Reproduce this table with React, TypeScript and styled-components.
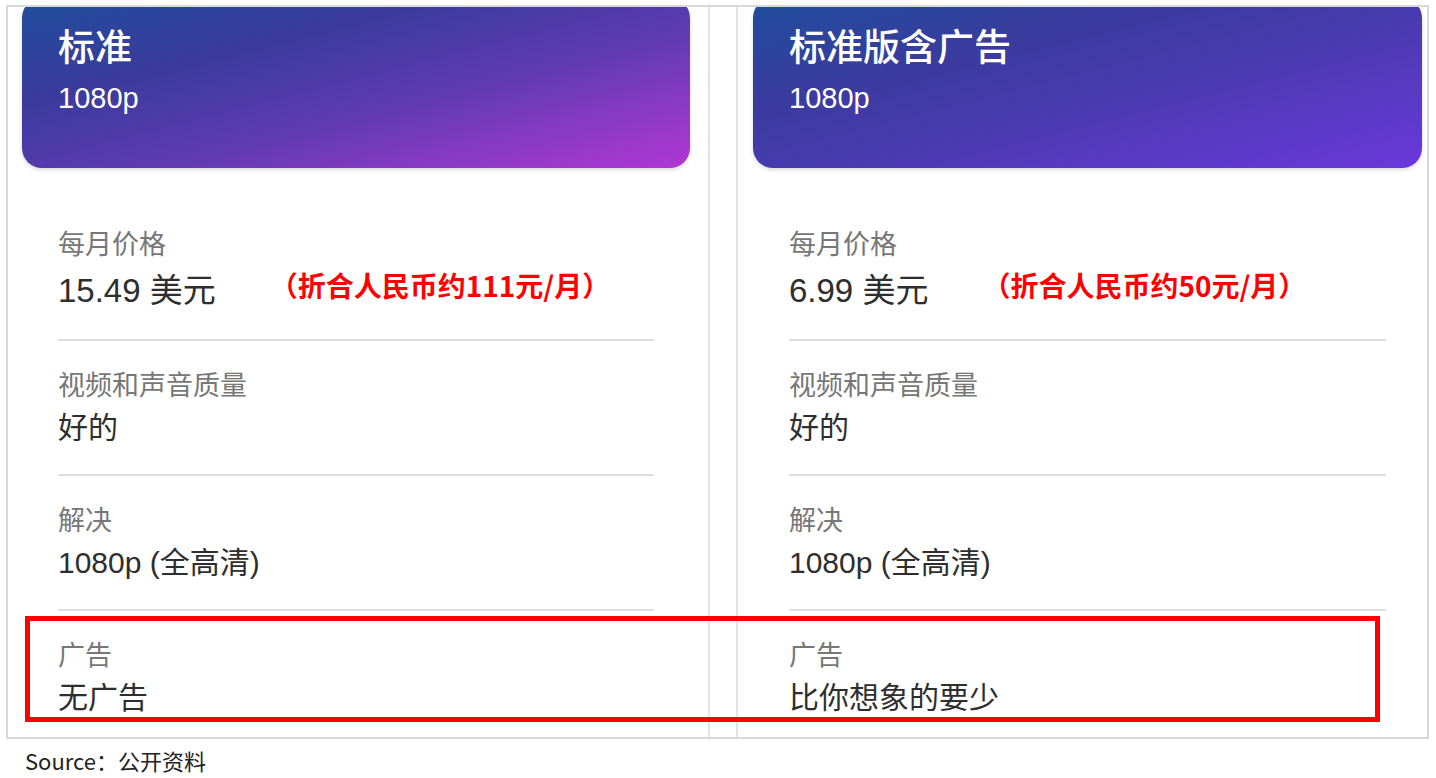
import React from "react";
import styled, { createGlobalStyle } from "styled-components";

const GlobalStyle = createGlobalStyle`
  html, body { margin: 0; padding: 0; background: #ffffff; }
  body { font-family: "Liberation Sans", "Noto Sans CJK SC", sans-serif; }
`;

const Page = styled.div`
  position: relative;
  width: 1436px;
  height: 778px;
  padding: 5px 0 0 6px;
  box-sizing: border-box;
  overflow: hidden;
`;

const Frame = styled.div`
  width: 1423px;
  height: 734px;
  box-sizing: border-box;
  border: 2px solid #d9d9d9;
  display: flex;
  overflow: hidden;
  background: #fff;
`;

const Panel = styled.div<{ $side: "left" | "right" }>`
  display: flex;
  flex-direction: column;
  box-sizing: border-box;
  ${(p) =>
    p.$side === "left"
      ? `width: 702px; border-right: 2px solid #e4e4e4; margin-right: 26px;`
      : `flex: 1; border-left: 2px solid #e4e4e4;`}
`;

const PlanCard = styled.div<{ $variant: "standard" | "ads"; $ml: number; $w: number }>`
  margin-top: -9px;
  margin-left: ${(p) => p.$ml}px;
  width: ${(p) => p.$w}px;
  height: 170px;
  box-sizing: border-box;
  padding: 29px 0 0 36px;
  border-radius: 20px;
  color: #fff;
  box-shadow: 0 2px 4px rgba(0, 0, 0, 0.15);
  background: ${(p) =>
    p.$variant === "standard"
      ? "linear-gradient(to bottom right, #1f4e9c 0%, #3a3b9c 30%, #5c3bb0 58%, #8a3ac6 80%, #b236d4 100%)"
      : "linear-gradient(to bottom right, #1f4e9c 0%, #3a3b9e 32%, #4d3ab4 60%, #5c3ac8 82%, #6c37dc 100%)"};
`;

const PlanTitle = styled.div`
  font-family: "Liberation Sans", "Noto Sans CJK SC", sans-serif;
  font-size: 37px;
  line-height: 44px;
  font-weight: 500;
`;

const PlanSub = styled.div`
  margin-top: 10px;
  font-size: 29px;
  line-height: 34px;
`;

const Sections = styled.div<{ $pl: number; $w: number }>`
  margin-top: 32px;
  margin-left: ${(p) => p.$pl}px;
  width: ${(p) => p.$w}px;
  display: flex;
  flex-direction: column;
`;

const Section = styled.div<{ $last?: boolean }>`
  padding: 28px 0 ${(p) => (p.$last ? 0 : 26)}px;
  border-bottom: ${(p) => (p.$last ? "none" : "2px solid #dedede")};
`;

const Label = styled.div`
  font-family: "Liberation Sans", "Noto Sans CJK SC", sans-serif;
  font-size: 27px;
  line-height: 34px;
  color: #777;
`;

const Value = styled.div`
  margin-top: 5px;
  font-family: "Liberation Sans", "Noto Sans CJK SC", sans-serif;
  font-size: 30px;
  line-height: 40px;
  color: #2e2e2e;
`;

const PriceRow = styled.div`
  margin-top: 7px;
  height: 44px;
  display: flex;
  align-items: center;
  gap: 58px;
`;

const Price = styled.div`
  font-family: "Liberation Sans", "Noto Sans CJK SC", sans-serif;
  font-size: 33px;
  line-height: 44px;
  color: #2e2e2e;
`;

const Note = styled.div`
  font-family: "Noto Sans CJK SC", sans-serif;
  font-size: 28px;
  line-height: 36px;
  font-weight: 700;
  color: #ff0000;
  margin-bottom: 12px;
  margin-left: -4px;
`;

const Highlight = styled.div`
  position: absolute;
  left: 25px;
  top: 616px;
  width: 1355px;
  height: 106px;
  box-sizing: border-box;
  border: 5px solid #ff0000;
  pointer-events: none;
`;

const Caption = styled.div`
  margin: 6px 0 0 19px;
  font-family: "Noto Sans CJK SC", sans-serif;
  font-size: 22px;
  line-height: 30px;
  color: #222;
`;

type Plan = {
  variant: "standard" | "ads";
  title: string;
  price: string;
  note: string;
  quality: string;
  resolution: string;
  ads: string;
};

const plans: Plan[] = [
  {
    variant: "standard",
    title: "标准",
    price: "15.49 美元",
    note: "（折合人民币约111元/月）",
    quality: "好的",
    resolution: "1080p (全高清)",
    ads: "无广告",
  },
  {
    variant: "ads",
    title: "标准版含广告",
    price: "6.99 美元",
    note: "（折合人民币约50元/月）",
    quality: "好的",
    resolution: "1080p (全高清)",
    ads: "比你想象的要少",
  },
];

const PlanColumn: React.FC<{ plan: Plan; side: "left" | "right" }> = ({ plan, side }) => {
  const left = side === "left";
  return (
    <Panel $side={side}>
      <PlanCard $variant={plan.variant} $ml={left ? 14 : 15} $w={left ? 668 : 669}>
        <PlanTitle>{plan.title}</PlanTitle>
        <PlanSub>1080p</PlanSub>
      </PlanCard>
      <Sections $pl={left ? 50 : 51} $w={left ? 596 : 597}>
        <Section>
          <Label>每月价格</Label>
          <PriceRow>
            <Price>{plan.price}</Price>
            <Note>{plan.note}</Note>
          </PriceRow>
        </Section>
        <Section>
          <Label>视频和声音质量</Label>
          <Value>{plan.quality}</Value>
        </Section>
        <Section>
          <Label>解决</Label>
          <Value>{plan.resolution}</Value>
        </Section>
        <Section $last>
          <Label>广告</Label>
          <Value>{plan.ads}</Value>
        </Section>
      </Sections>
    </Panel>
  );
};

export default function App() {
  return (
    <>
      <GlobalStyle />
      <Page>
        <Frame>
          <PlanColumn plan={plans[0]} side="left" />
          <PlanColumn plan={plans[1]} side="right" />
        </Frame>
        <Caption>Source：公开资料</Caption>
        <Highlight />
      </Page>
    </>
  );
}
